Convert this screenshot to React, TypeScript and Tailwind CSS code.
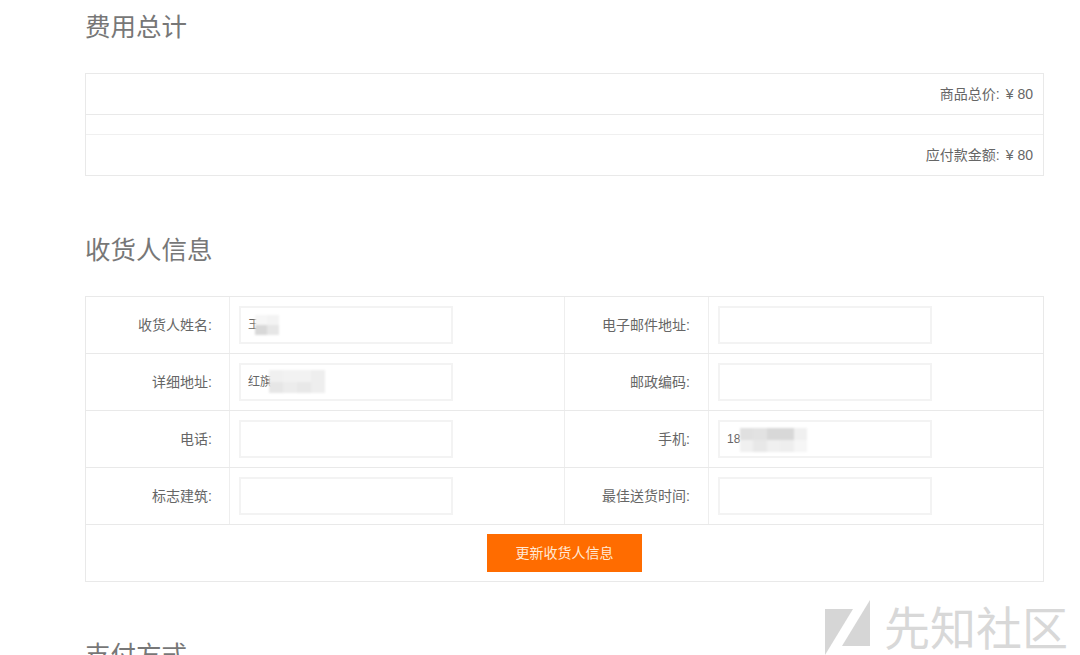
import React from "react";

const font = { fontFamily: '"Liberation Sans", "Noto Sans CJK SC", sans-serif' };

// mosaic over the blurred-out personal data in the inputs
function Mosaic({ className, top, bottom }: { className: string; top: string[]; bottom: string[] }) {
  return (
    <span className={"absolute flex flex-col blur-[1px] " + className}>
      <span className="flex flex-1">
        {top.map((c, i) => (
          <span key={i} className={"flex-1 " + c} />
        ))}
      </span>
      <span className="flex flex-1">
        {bottom.map((c, i) => (
          <span key={i} className={"flex-1 " + c} />
        ))}
      </span>
    </span>
  );
}

const masks: Record<string, React.ReactNode> = {
  "王": (
    <Mosaic
      className="left-[14px] top-[7px] h-[20px] w-[24px]"
      top={["bg-[#f6f6f6]", "bg-[#f3f3f3]"]}
      bottom={["bg-[#d8d8d8]", "bg-[#e6e6e6]"]}
    />
  ),
  "红旗": (
    <Mosaic
      className="left-[28px] top-[5px] h-[23px] w-[56px]"
      top={["bg-[#f0f0f0]", "bg-[#f2f2f2]", "bg-[#f2f2f2]", "bg-[#eeeeee]"]}
      bottom={["bg-[#e6e6e6]", "bg-[#ececec]", "bg-[#e8e8e8]", "bg-[#eeeeee]"]}
    />
  ),
  "18": (
    <Mosaic
      className="left-[20px] top-[6px] h-[24px] w-[67px]"
      top={["bg-[#e0e0e0]", "bg-[#e2e2e2]", "bg-[#d8d8d8]", "bg-[#d8d8d8]", "bg-[#f0f0f0]"]}
      bottom={["bg-[#f0f0f0]", "bg-[#e8e8e8]", "bg-[#f0f0f0]", "bg-[#eeeeee]", "bg-[#f6f6f6]"]}
    />
  ),
};

const rows = [
  { left: "收货人姓名:", leftVal: "王", right: "电子邮件地址:", rightVal: "" },
  { left: "详细地址:", leftVal: "红旗", right: "邮政编码:", rightVal: "" },
  { left: "电话:", leftVal: "", right: "手机:", rightVal: "18" },
  { left: "标志建筑:", leftVal: "", right: "最佳送货时间:", rightVal: "" },
];

function Field({ value }: { value: string }) {
  return (
    <div className="relative flex h-[38px] w-[214px] items-center overflow-hidden border-2 border-[#f3f3f3] bg-white pl-[7px] text-[12px] text-[#666]">
      {value}
      {masks[value]}
    </div>
  );
}

export default function App() {
  return (
    <div
      className="relative h-[655px] w-[1080px] overflow-hidden bg-white pl-[85px] pr-[36px] text-[#666]"
      style={font}
    >
      <h2 className="h-[73px] pt-[10px] text-[25.5px] leading-[34px] text-[#777]">费用总计</h2>

      <div className="border border-[#e9e9e9] text-[14px]">
        <div className="flex h-[41px] items-center justify-end border-b border-[#e9e9e9] pr-[10px]">
          商品总价:<span className="ml-[6px]">¥ 80</span>
        </div>
        <div className="h-[20px] border-b border-[#f0f0f0]" />
        <div className="flex h-[40px] items-center justify-end pr-[10px]">
          应付款金额:<span className="ml-[6px]">¥ 80</span>
        </div>
      </div>

      <h2 className="mt-[57px] h-[63px] text-[25.5px] leading-[34px] text-[#777]">收货人信息</h2>

      <div className="border border-[#e9e9e9] text-[14px]">
        {rows.map((r) => (
          <div key={r.left} className="grid h-[57px] grid-cols-[144px_335px_144px_1fr] border-b border-[#e9e9e9]">
            <div className="flex items-center justify-end border-r border-[#eee] pr-[17px]">{r.left}</div>
            <div className="flex items-center border-r border-[#eee] pl-[9px]">
              <Field value={r.leftVal} />
            </div>
            <div className="flex items-center justify-end border-r border-[#eee] pr-[18px]">{r.right}</div>
            <div className="flex items-center pl-[9px]">
              <Field value={r.rightVal} />
            </div>
          </div>
        ))}
        <div className="flex h-[56px] items-center justify-center">
          <button className="h-[38px] w-[155px] bg-[#ff6c00] text-[14px] text-[#ffe9d6]">更新收货人信息</button>
        </div>
      </div>

      <h2 className="mt-[56px] text-[25.5px] leading-[34px] text-[#777]">支付方式</h2>

      <div className="absolute left-[824px] top-[600px] flex items-start gap-[12px]">
        <svg width="48" height="55" viewBox="0 0 48 55" className="shrink-0">
          <path d="M1 9H29L1 55Z" fill="#d6d6d6" />
          <path d="M46 0V46H18Z" fill="#d6d6d6" />
        </svg>
        <span className="pt-[4px] text-[46px] leading-[50px] text-[#d8d8d8]">先知社区</span>
      </div>
    </div>
  );
}
